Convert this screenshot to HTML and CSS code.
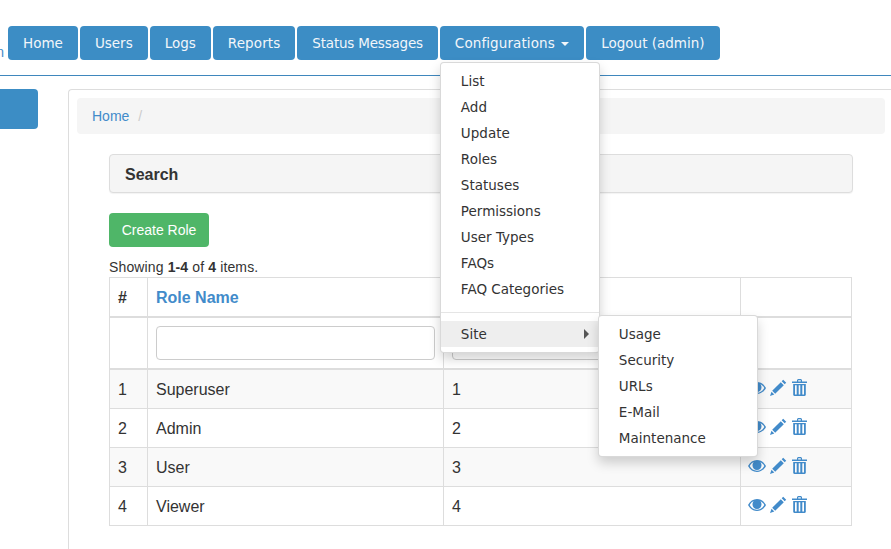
FILE: index.html
```html
<!DOCTYPE html>
<html>
<head>
	<title>Roles</title>
	<meta charset=utf-8>
	<link rel="stylesheet" href="styles.css">
</head>
<body>
	<header class="topbar">
		<div class="brand-clip"><a class="brand" href="#">Admin</a></div>
		<nav class="menu">
			<a class="tab" href="#">Home</a>
			<a class="tab" href="#">Users</a>
			<a class="tab" href="#">Logs</a>
			<a class="tab tab-wide" href="#">Reports</a>
			<a class="tab tab-tight" href="#">Status Messages</a>
			<div class="tab-wrap">
				<a class="tab tab-wide" href="#">Configurations <span class="caret"></span></a>
				<ul class="dropdown">
					<li><a href="#">List</a></li>
					<li><a href="#">Add</a></li>
					<li><a href="#">Update</a></li>
					<li><a href="#">Roles</a></li>
					<li><a href="#">Statuses</a></li>
					<li><a href="#">Permissions</a></li>
					<li><a href="#">User Types</a></li>
					<li><a href="#">FAQs</a></li>
					<li><a href="#">FAQ Categories</a></li>
					<li class="divider"></li>
					<li class="has-sub">
						<a href="#">Site</a>
						<ul class="dropdown submenu">
							<li><a href="#">Usage</a></li>
							<li><a href="#">Security</a></li>
							<li><a href="#">URLs</a></li>
							<li><a href="#">E-Mail</a></li>
							<li><a href="#">Maintenance</a></li>
						</ul>
					</li>
				</ul>
			</div>
			<a class="tab" href="#">Logout (admin)</a>
		</nav>
	</header>

	<div class="page">
		<aside class="sidebar">
			<a class="side-btn" href="#"></a>
		</aside>
		<main class="panel">
			<div class="breadcrumb"><a href="#">Home</a><span class="sep">/</span></div>
			<div class="content">
				<div class="search-box">Search</div>
				<a class="btn-create" href="#">Create Role</a>
				<div class="summary">Showing <b>1-4</b> of <b>4</b> items.</div>
				<table class="grid">
					<colgroup>
						<col class="col-num">
						<col class="col-name">
						<col class="col-order">
						<col>
					</colgroup>
					<thead>
						<tr>
							<th>#</th>
							<th><a href="#">Role Name</a></th>
							<th></th>
							<th></th>
						</tr>
						<tr class="filters">
							<td></td>
							<td><input type="text"></td>
							<td><input type="text"></td>
							<td></td>
						</tr>
					</thead>
					<tbody>
						<tr>
							<td>1</td>
							<td>Superuser</td>
							<td>1</td>
							<td class="actions">
								<svg class="ico-eye" viewBox="0 0 18 14"><use href="#eye"/></svg>
								<svg class="ico-pen" viewBox="0 0 17 17"><use href="#pen"/></svg>
								<svg class="ico-bin" viewBox="0 0 15 17"><use href="#bin"/></svg>
							</td>
						</tr>
						<tr>
							<td>2</td>
							<td>Admin</td>
							<td>2</td>
							<td class="actions">
								<svg class="ico-eye" viewBox="0 0 18 14"><use href="#eye"/></svg>
								<svg class="ico-pen" viewBox="0 0 17 17"><use href="#pen"/></svg>
								<svg class="ico-bin" viewBox="0 0 15 17"><use href="#bin"/></svg>
							</td>
						</tr>
						<tr>
							<td>3</td>
							<td>User</td>
							<td>3</td>
							<td class="actions">
								<svg class="ico-eye" viewBox="0 0 18 14"><use href="#eye"/></svg>
								<svg class="ico-pen" viewBox="0 0 17 17"><use href="#pen"/></svg>
								<svg class="ico-bin" viewBox="0 0 15 17"><use href="#bin"/></svg>
							</td>
						</tr>
						<tr>
							<td>4</td>
							<td>Viewer</td>
							<td>4</td>
							<td class="actions">
								<svg class="ico-eye" viewBox="0 0 18 14"><use href="#eye"/></svg>
								<svg class="ico-pen" viewBox="0 0 17 17"><use href="#pen"/></svg>
								<svg class="ico-bin" viewBox="0 0 15 17"><use href="#bin"/></svg>
							</td>
						</tr>
					</tbody>
				</table>
			</div>
		</main>
	</div>

	<!-- icons used by the action column -->
	<svg class="defs" width="0" height="0">
		<defs>
			<g id="eye">
				<path fill-rule="evenodd" d="M0 7C2 3.2 5.2 1 9 1s7 2.2 9 6c-2 3.8-5.2 6-9 6S2 10.800 0 7zM1.700 7C3.300 9.900 5.700 11.700 9 11.700S14.700 9.900 16.300 7C15.300 5.200 14 3.800 12.300 3c.7.900 1.200 2.100 1.200 3.400C13.500 9 11.500 11 9 11S4.500 9 4.500 6.400C4.500 5.100 5 3.900 5.700 3 4 3.800 2.700 5.200 1.700 7z"/>
				<path d="M9 3.200a3.300 3.300 0 1 0 3.300 3.300c0 -.8-.3-1.500-.7-2-.2.700-.8 1.100-1.500 1.100-.9 0-1.600-.7-1.600-1.600 0-.3.100-.6.300-.8H9z"/>
			</g>
			<g id="pen">
				<path d="M13.200 0.800l3 3-1.500 1.500-3-3zM10.800 3.200l3 3-8.600 8.600-3-3zM1.500 12.700l2.800 2.800L0 17z"/>
			</g>
			<g id="bin">
				<path fill-rule="evenodd" d="M0 2.600h5V1l1-1h3l1 1v1.600h5v1.500H0zM6.200 1.200v1.400h2.600V1.200z"/>
				<path fill-rule="evenodd" d="M1.200 5h12.600v10.800c0 .7-.5 1.200-1.200 1.200H2.400c-.7 0-1.200-.5-1.200-1.200zM3 6.300v9.300h1.700V6.300zM6.700 6.300v9.300h1.600V6.300zM10.300 6.300v9.300H12V6.300z"/>
			</g>
		</defs>
	</svg>
</body>
</html>
```

FILE: styles.css
```css
html, body {
	height: 100%;
	overflow: hidden;
}
body {
	margin: 0;
	font-family: "Liberation Sans", Arial, sans-serif;
	font-size: 14px;
	color: #333;
	background: #fff;
}
a {
	color: #428bca;
	text-decoration: none;
}
.defs {
	position: absolute;
}

/* top menu */
.topbar {
	display: flex;
	align-items: flex-end;
	height: 75px;
	border-bottom: 1px solid #3f87bd;
}
.brand-clip {
	flex: 0 0 4px;
	min-width: 0;
	display: flex;
	justify-content: flex-end;
	margin-right: 4px;
	margin-bottom: 13px;
	line-height: 20px;
}
.menu {
	display: flex;
	gap: 2px;
	margin-bottom: 15px;
	font-family: "DejaVu Sans", sans-serif;
}
.tab {
	display: block;
	height: 34px;
	box-sizing: border-box;
	padding: 0 15px;
	border-radius: 4px;
	background: #3c8dc5;
	color: #f2f6fa;
	font-size: 13.5px;
	line-height: 34px;
	white-space: nowrap;
}
.tab-wide {
	letter-spacing: .1px;
}
.tab-tight {
	letter-spacing: -.2px;
}
.tab-wrap {
	position: relative;
}
.caret {
	display: inline-block;
	margin-left: 2px;
	vertical-align: middle;
	border-top: 4px solid #f2f6fa;
	border-left: 4px solid transparent;
	border-right: 4px solid transparent;
}

/* dropdowns */
.dropdown {
	position: absolute;
	top: 36px;
	left: 0;
	z-index: 10;
	width: 160px;
	box-sizing: border-box;
	margin: 0;
	padding: 5px 0;
	list-style: none;
	background: #fff;
	border: 1px solid rgba(0,0,0,.15);
	border-radius: 4px;
	box-shadow: 0 6px 12px rgba(0,0,0,.175);
}
.dropdown a {
	display: block;
	height: 26px;
	padding: 0 20px;
	color: #333;
	font-size: 13.5px;
	line-height: 26px;
}
.divider {
	height: 1px;
	margin: 10px 0 8px;
	background: #e5e5e5;
}
.has-sub {
	position: relative;
}
.has-sub > a {
	background: #eee;
}
.has-sub::after {
	content: "";
	position: absolute;
	top: 8px;
	right: 10px;
	border-left: 5px solid #555;
	border-top: 5px solid transparent;
	border-bottom: 5px solid transparent;
}
.submenu {
	top: -6px;
	left: 157px;
}

/* page */
.page {
	display: flex;
	padding-top: 13px;
}
.sidebar {
	flex: 0 0 68px;
}
.side-btn {
	display: block;
	width: 60px;
	height: 40px;
	margin-left: -22px;
	border-radius: 4px;
	background: #3c8dc5;
}
.panel {
	flex: 0 0 823px;
	box-sizing: border-box;
	height: 460px;
	padding: 8px 6px 0 8px;
	border: 1px solid #ddd;
	border-width: 1px 0 0 1px;
	border-radius: 4px 0 0 0;
}
.breadcrumb {
	height: 36px;
	padding: 0 15px;
	border-radius: 4px;
	background: #f5f5f5;
	line-height: 36px;
}
.sep {
	margin-left: 9px;
	color: #ccc;
}
.content {
	padding: 20px 32px 0;
}
.search-box {
	height: 39px;
	box-sizing: border-box;
	padding-left: 15px;
	border: 1px solid #ddd;
	border-radius: 4px;
	background: #f5f5f5;
	box-shadow: 0 1px 1px rgba(0,0,0,.05);
	font-size: 16px;
	font-weight: bold;
	line-height: 39px;
}
.btn-create {
	display: block;
	width: 100px;
	height: 34px;
	margin: 20px 0 10px;
	border-radius: 4px;
	background: #4fb668;
	color: #fff;
	line-height: 34px;
	text-align: center;
}
.summary {
	height: 20px;
	letter-spacing: .13px;
	line-height: 20px;
}

/* table */
.grid {
	width: 743px;
	table-layout: fixed;
	border-collapse: collapse;
	font-size: 16px;
}
.col-num {
	width: 38px;
}
.col-name {
	width: 296px;
}
.col-order {
	width: 297px;
}
.grid th, .grid td {
	box-sizing: border-box;
	padding: 8px;
	border: 1px solid #ddd;
	line-height: 22px;
	text-align: left;
}
.grid th {
	height: 39px;
	padding-top: 9px;
	padding-bottom: 7px;
	border-bottom-width: 2px;
}
.filters td {
	height: 52px;
	border-bottom-width: 2px;
}
.grid input {
	display: block;
	width: 279px;
	height: 34px;
	box-sizing: border-box;
	border: 1px solid #ccc;
	border-radius: 4px;
	background: #fff;
}
.grid tbody td {
	height: 39px;
	padding-top: 9px;
	padding-bottom: 7px;
}
.grid tbody tr:nth-child(odd) {
	background: #f9f9f9;
}
.grid .actions {
	padding: 0 0 3px 7px;
	white-space: nowrap;
	font-size: 0;
}
.actions svg {
	fill: #428bca;
	vertical-align: middle;
}
.ico-eye {
	width: 18px;
	height: 14px;
}
.ico-pen {
	width: 17px;
	height: 17px;
	margin-left: 4px;
}
.ico-bin {
	width: 15px;
	height: 17px;
	margin-left: 5px;
}
```
